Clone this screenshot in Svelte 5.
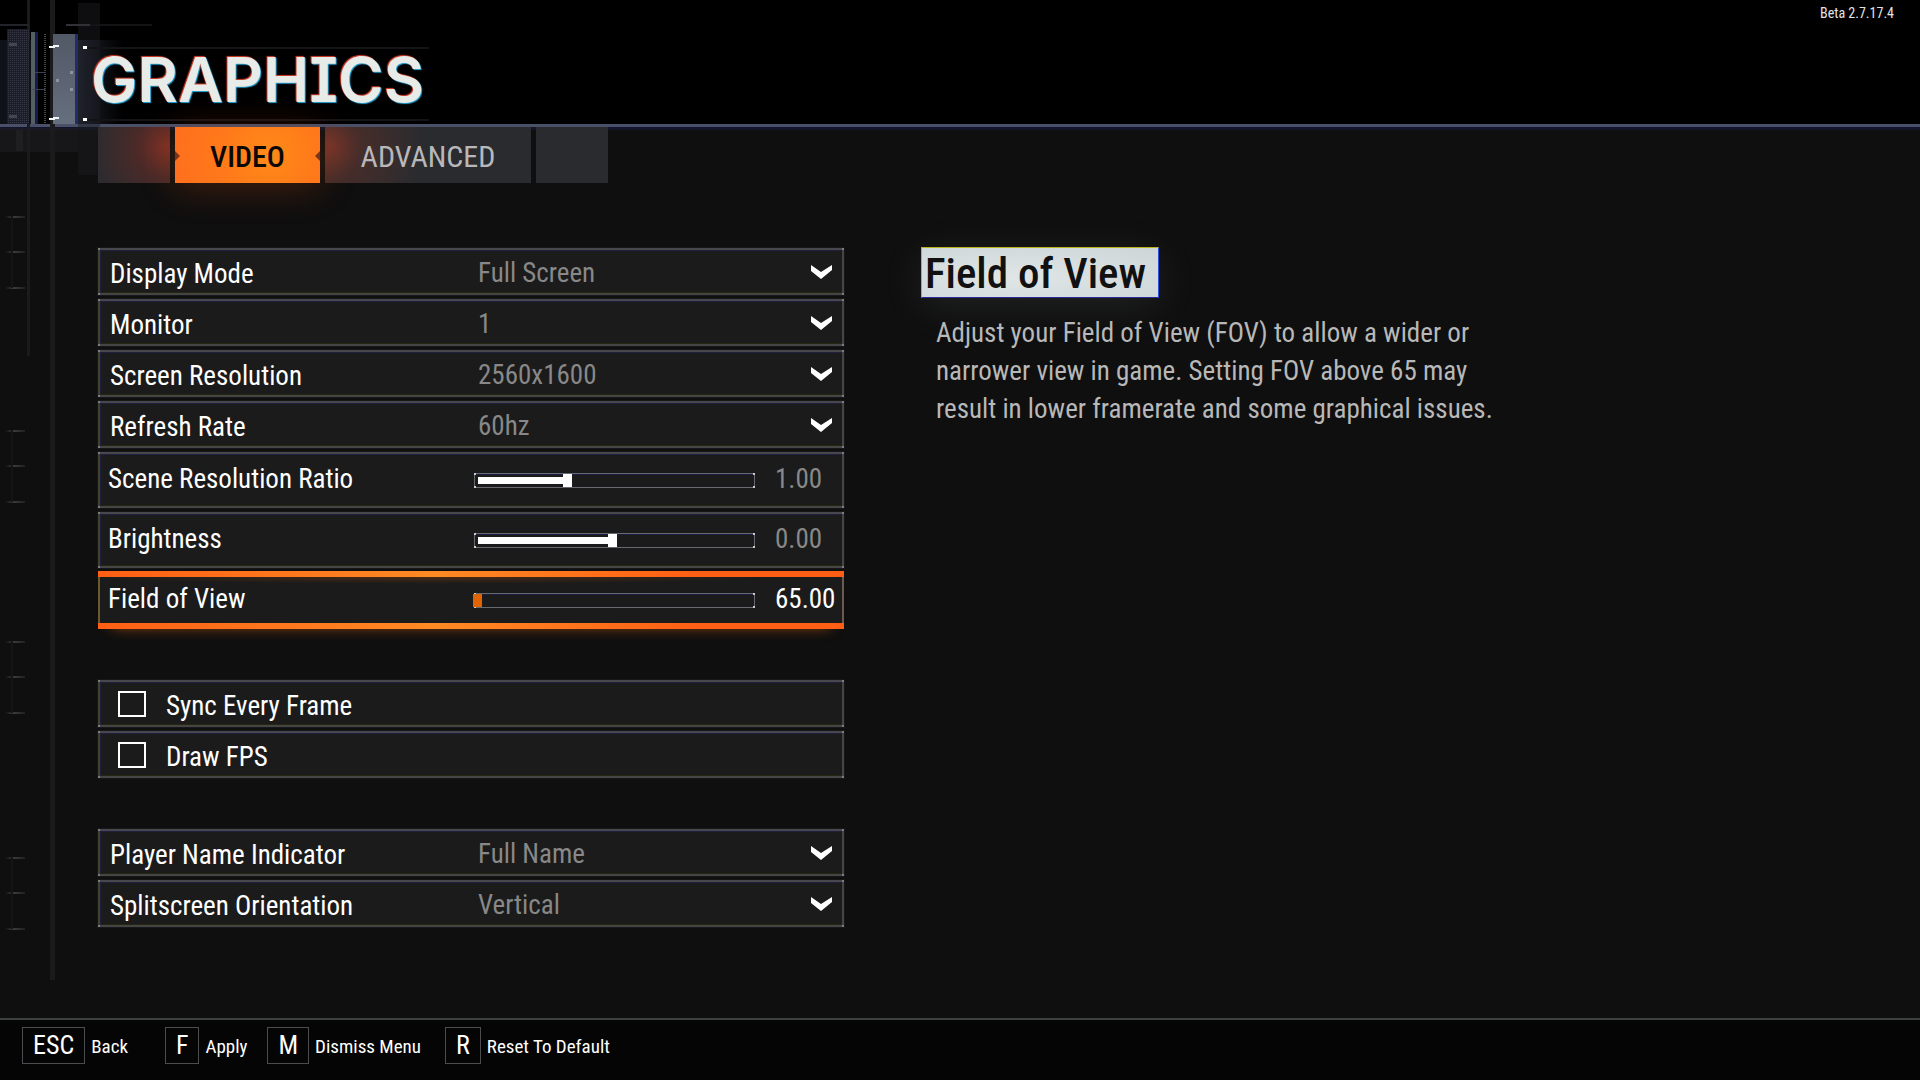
<script>
	const version = 'Beta 2.7.17.4';

	const tabs = [
		{ id: 'video', label: 'VIDEO' },
		{ id: 'advanced', label: 'ADVANCED' }
	];

	const displayOptions = [
		{ id: 'display-mode', label: 'Display Mode', value: 'Full Screen' },
		{ id: 'monitor', label: 'Monitor', value: '1' },
		{ id: 'resolution', label: 'Screen Resolution', value: '2560x1600' },
		{ id: 'refresh', label: 'Refresh Rate', value: '60hz' }
	];

	const playerOptions = [
		{ id: 'player-name', label: 'Player Name Indicator', value: 'Full Name' },
		{ id: 'splitscreen', label: 'Splitscreen Orientation', value: 'Vertical' }
	];

	const keys = [
		{ key: 'ESC', label: 'Back', name: 'back' },
		{ key: 'F', label: 'Apply', name: 'apply' },
		{ key: 'M', label: 'Dismiss Menu', name: 'dismiss' },
		{ key: 'R', label: 'Reset To Default', name: 'reset' }
	];

	let sliders = $state([
		{ id: 'scene-ratio', label: 'Scene Resolution Ratio', min: 0.5, max: 2, value: 1 },
		{ id: 'brightness', label: 'Brightness', min: -1, max: 1, value: 0 },
		{ id: 'fov', label: 'Field of View', min: 65, max: 80, value: 65 }
	]);

	let toggles = $state([
		{ id: 'sync', label: 'Sync Every Frame', checked: false },
		{ id: 'fps', label: 'Draw FPS', checked: false }
	]);

	let activeTab = $state('video');
	let focused = $state('fov');

	function fill(s) {
		return (s.value - s.min) / (s.max - s.min);
	}
</script>

{#snippet dropdown(opt)}
	<div class="row select-row">
		<label for={opt.id}>{opt.label}</label>
		<div class="select">
			<select id={opt.id}>
				<option>{opt.value}</option>
			</select>
			<svg class="chevron" viewBox="0 0 21 14" aria-hidden="true">
				<path d="M0 0 L10 7 L21 0 V5 L10 14 L0 6 Z" fill="#fff" />
			</svg>
		</div>
	</div>
{/snippet}

<div class="screen">
	<svg class="rails" viewBox="0 0 460 1000" aria-hidden="true">
		<defs>
			<pattern id="mesh" width="2" height="2" patternUnits="userSpaceOnUse">
				<rect width="2" height="2" fill="#1c1d26" />
				<rect width="1" height="1" fill="#343746" />
			</pattern>
			<linearGradient id="fadeDown" x1="0" y1="0" x2="0" y2="1">
				<stop offset="0" stop-color="#515866" />
				<stop offset="1" stop-color="#666f7e" />
			</linearGradient>
			<linearGradient id="haze" x1="0" y1="0" x2="1" y2="0">
				<stop offset="0" stop-color="#2c3244" stop-opacity="0.8" />
				<stop offset="1" stop-color="#20222c" stop-opacity="0" />
			</linearGradient>
			<linearGradient id="tick" x1="0" y1="0" x2="1" y2="0">
				<stop offset="0" stop-color="#3c3c3c" stop-opacity="0" />
				<stop offset="0.45" stop-color="#3c3c3c" />
				<stop offset="1" stop-color="#202020" />
			</linearGradient>
		</defs>
		<rect x="27" y="0" width="3" height="356" fill="#1b1b1d" />
		<rect x="50" y="0" width="5" height="980" fill="#1b1b1b" />
		<rect x="0" y="40" width="32" height="84" fill="#10121a" />
		<rect x="7" y="29" width="22" height="95" fill="url(#mesh)" />
		<rect x="31" y="32" width="4" height="92" fill="#555e62" />
		<rect x="35" y="32" width="3" height="92" fill="#161b48" />
		<path d="M45 34V124" stroke="#8c8c86" stroke-dasharray="1 1" />
		<rect x="53" y="34" width="22" height="90" fill="url(#fadeDown)" />
		<rect x="75" y="34" width="3" height="90" fill="#232b68" />
		<rect x="78" y="40" width="45" height="84" fill="url(#haze)" />
		<rect x="78" y="3" width="22" height="172" fill="#1c1c22" opacity="0.5" />
		<rect x="0" y="24" width="29" height="2" fill="#23242a" />
		<rect x="66" y="24" width="24" height="2" fill="#303238" />
		<rect x="90" y="24" width="62" height="2" fill="#131416" />
		<rect x="9" y="43" width="8" height="3" fill="#424650" />
		<rect x="9" y="115" width="8" height="3" fill="#424650" />
		<rect x="35" y="72" width="11" height="1" fill="#394050" />
		<rect x="33" y="89" width="12" height="1" fill="#394050" />
		<path d="M49 47H54V46H59M49 119H54V118H59" stroke="#f0f4f6" stroke-width="2" fill="none" />
		<rect x="70" y="71" width="3" height="3" fill="#8a93a0" />
		<rect x="56" y="79" width="3" height="3" fill="#8a93a0" />
		<rect x="70" y="88" width="3" height="3" fill="#8a93a0" />
		<rect x="83" y="46" width="4" height="3" fill="#fff" />
		<rect x="83" y="118" width="4" height="3" fill="#fff" />
		<rect x="88" y="47" width="341" height="2" fill="#141416" />
		<rect x="88" y="119" width="341" height="2" fill="#141416" />
		<rect x="0" y="128" width="78" height="24" fill="#1d1d1f" opacity="0.6" />
		<rect x="16" y="130" width="7" height="21" fill="#1f1f21" />
		{#each [216, 430, 641, 857] as y}
			<rect x="5" y={y} width="20" height="2" fill="url(#tick)" />
			<rect x="5" y={y + 35} width="20" height="2" fill="url(#tick)" />
			<rect x="5" y={y + 71} width="20" height="2" fill="url(#tick)" />
			<rect x="11" y={y} width="2" height="72" fill="#151515" />
		{/each}
	</svg>

	<header>
		<h1>GRAPHICS</h1>
		<span class="version">{version}</span>
	</header>

	<nav>
		<span class="tab-end"></span>
		{#each tabs as tab}
			<button class="tab {tab.id}" class:active={activeTab === tab.id} onclick={() => (activeTab = tab.id)}>
				{tab.label}
			</button>
		{/each}
		<span class="tab-end"></span>
	</nav>

	<main>
		<div class="settings">
			<section>
				{#each displayOptions as opt}
					{@render dropdown(opt)}
				{/each}
				{#each sliders as s}
					<div class="row slider-row" class:focused={focused === s.id}>
						<label for={s.id}>{s.label}</label>
						<div class="track">
							<input
								id={s.id}
								type="range"
								min={s.min}
								max={s.max}
								step="0.01"
								bind:value={s.value}
								onfocus={() => (focused = s.id)}
								style="--fill: {fill(s)}"
							/>
						</div>
						<output for={s.id}>{s.value.toFixed(2)}</output>
					</div>
				{/each}
			</section>

			<section>
				{#each toggles as t}
					<div class="row toggle-row">
						<input id={t.id} type="checkbox" bind:checked={t.checked} />
						<label for={t.id}>{t.label}</label>
					</div>
				{/each}
			</section>

			<section>
				{#each playerOptions as opt}
					{@render dropdown(opt)}
				{/each}
			</section>
		</div>

		<aside>
			<h2>Field of View</h2>
			<p>
				Adjust your Field of View (FOV) to allow a wider or<br />
				narrower view in game. Setting FOV above 65 may<br />
				result in lower framerate and some graphical issues.
			</p>
		</aside>
	</main>

	<footer>
		{#each keys as k}
			<button class="hint {k.name}">
				<kbd>{k.key}</kbd>
				<span>{k.label}</span>
			</button>
		{/each}
	</footer>
</div>

<style>
	:global(body) {
		background: #0f0f0f;
	}

	.screen {
		position: relative;
		display: flex;
		flex-direction: column;
		min-height: 100vh;
		color: #fff;
		font-family: 'Roboto Condensed', 'Liberation Sans Narrow', Roboto, sans-serif;
		font-size: 27px;
		line-height: 32px;
	}

	button,
	select {
		font: inherit;
		color: inherit;
		background: none;
		border: 0;
		padding: 0;
		cursor: pointer;
	}

	.rails {
		position: absolute;
		z-index: 1;
		top: 0;
		left: 0;
		width: 460px;
		height: 1000px;
		pointer-events: none;
	}

	/* Header */
	header {
		display: flex;
		justify-content: space-between;
		align-items: flex-start;
		box-sizing: border-box;
		height: 127px;
		padding: 0 26px 0 91px;
		background: #000;
		border-bottom: 3px solid #4a5068;
		box-shadow: 0 1px 0 2px #13142b;
	}

	h1 {
		position: relative;
		z-index: 2;
		margin: 40px 0 0;
		font-family: Inter, sans-serif;
		/* serifed capital I */
		font-feature-settings: 'cv08';
		font-size: 62px;
		line-height: 80px;
		font-weight: 600;
		color: #e8ece8;
		text-shadow: -1px -1px 1px #d8402c, 1px 1px 1px #28a8dc;
	}

	.version {
		margin-top: 3px;
		font-size: 14px;
		line-height: 20px;
		color: #e4e4e4;
	}

	/* Tabs */
	nav {
		position: relative;
		z-index: 2;
		display: flex;
		gap: 5px;
		padding-left: 98px;
		height: 56px;
	}

	.tab-end {
		width: 72px;
		background: #2a2b2f;
	}

	.tab-end:first-child {
		background: radial-gradient(circle at 95% 35%, #7a3026 0%, #4a2a28 40%, #2c2b2f 95%);
	}

	.tab {
		padding-top: 4px;
		color: #b8b8ba;
		background: #2a2b2f;
		font-size: 30px;
	}

	.tab.advanced {
		width: 206px;
		background: radial-gradient(circle at 2% 35%, #74342a 0%, #452d2a 16%, #2a2b2f 46%);
	}

	.tab.video {
		width: 145px;
	}

	.tab.active {
		position: relative;
		color: #0c0806;
		font-weight: 500;
		background: radial-gradient(circle at 65% 50%, #ff8a18 0%, #ff7a1a 45%, #ff6f1e 100%);
		box-shadow: 0 4px 36px rgba(200, 70, 10, 0.3);
	}

	.tab.active::before,
	.tab.active::after {
		content: '';
		position: absolute;
		top: 24px;
		border: 5px solid transparent;
	}

	.tab.active::before {
		left: 0;
		border-left-color: #7c3418;
		border-right-width: 0;
	}

	.tab.active::after {
		right: 0;
		border-right-color: #7c3418;
		border-left-width: 0;
	}

	/* Layout */
	main {
		flex: 1;
		display: grid;
		grid-template-columns: minmax(500px, 746px) minmax(0, 1fr);
		column-gap: 77px;
		padding: 65px 98px 40px;
	}

	.settings {
		display: flex;
		flex-direction: column;
		gap: 51px;
	}

	section {
		display: flex;
		flex-direction: column;
		gap: 4px;
	}

	/* Rows */
	.row {
		position: relative;
		display: grid;
		align-items: center;
		box-sizing: border-box;
		height: 47px;
		border: 2px solid #454546;
		border-top-color: #48484c;
		border-left-color: #3f402e;
		background: #1b1b1b;
		box-shadow: 0 0 0 1px #17171a, inset 1px 1px 0 #1f1f40, inset 0 -1px 0 #26260f;
	}

	/* Lit corner points */
	.row::after,
	.track::after {
		--dot: linear-gradient(#7c7c80, #7c7c80);
		content: '';
		position: absolute;
		inset: -2px;
		background:
			var(--dot) top left / 2px 2px no-repeat,
			var(--dot) top right / 2px 2px no-repeat,
			var(--dot) bottom left / 2px 2px no-repeat,
			var(--dot) bottom right / 2px 2px no-repeat;
		pointer-events: none;
	}

	.track::after {
		--dot: linear-gradient(#c8ccce, #c8ccce);
		inset: -1px;
	}

	.select-row {
		grid-template-columns: 367px 1fr;
		padding-left: 10px;
	}

	.select-row label {
		padding-top: 4px;
	}

	.select {
		position: relative;
		display: flex;
	}

	select {
		appearance: none;
		width: 100%;
		height: 40px;
		padding: 2px 0 0 1px;
		color: #888;
		outline: none;
	}

	.chevron {
		position: absolute;
		right: 10px;
		top: 13px;
		width: 21px;
		height: 14px;
		pointer-events: none;
	}

	.slider-row {
		grid-template-columns: 366px 281px 1fr;
		height: 56px;
		padding-left: 8px;
	}

	.slider-row label,
	output {
		padding-bottom: 2px;
	}

	output {
		padding-left: 20px;
		color: #888;
	}

	.track {
		position: relative;
		display: flex;
		box-sizing: border-box;
		height: 15px;
		border: 1px solid #676b70;
		box-shadow: inset 0 1px 0 #1a1c40;
	}

	input[type='range'] {
		appearance: none;
		position: relative;
		z-index: 1;
		width: 279px;
		height: 13px;
		margin: 0 0 0 -2px;
		outline: none;
		background: linear-gradient(#fff, #fff) 5px center / calc((100% - 9px) * var(--fill)) 7px no-repeat;
	}

	input[type='range']::-webkit-slider-thumb {
		appearance: none;
		width: 9px;
		height: 13px;
		border: 0;
		border-radius: 0;
		background: #fff;
	}

	.focused {
		height: 58px;
		margin-top: -1px;
		border: 0;
		padding: 0 2px 0 10px;
		background:
			linear-gradient(90deg, #ff5f14, #ff8a24 45%, #ff5f14 80%) top / 100% 6px no-repeat,
			linear-gradient(90deg, #ff5f14, #ff8a24 45%, #ff5f14 80%) bottom / 100% 6px no-repeat,
			linear-gradient(#6a5a30, #6a5a30) left / 2px 100% no-repeat,
			linear-gradient(#6a5a50, #6a5a50) right / 2px 100% no-repeat,
			radial-gradient(ellipse at 45% 6px, #4a2a14, transparent 60%) top / 100% 14px no-repeat,
			#1b1b1b;
		box-shadow: 0 12px 14px -14px #a04a10;
	}

	.focused::after {
		content: none;
	}

	.focused output {
		color: #fff;
	}

	.focused input[type='range']::-webkit-slider-thumb {
		background: #e06404;
	}

	.toggle-row {
		grid-template-columns: 48px 1fr;
		padding-left: 18px;
	}

	input[type='checkbox'] {
		appearance: none;
		box-sizing: border-box;
		width: 28px;
		height: 26px;
		margin: 0;
		border: 2px solid #fff;
	}

	input[type='checkbox']:checked {
		background: #fff content-box;
		padding: 4px;
	}

	.toggle-row label {
		padding-top: 4px;
	}

	/* Description */
	h2 {
		box-sizing: border-box;
		width: fit-content;
		min-width: 238px;
		margin: -1px 0 0;
		padding: 1px 12px 0 3px;
		border: 1px solid;
		border-color: #b8b420 #2a50e0 #2a2a9a #b8b420;
		background: radial-gradient(ellipse at 40% 60%, #e0e6e6, #cdd5d7);
		color: #111;
		font-size: 43px;
		line-height: 48px;
		font-weight: 500;
		box-shadow: 0 8px 40px rgba(200, 210, 210, 0.1);
	}

	p {
		margin: 16px 0 0 15px;
		color: #b8b8b8;
		line-height: 38px;
	}

	/* Footer */
	footer {
		display: flex;
		align-items: flex-start;
		box-sizing: border-box;
		height: 62px;
		padding: 7px 22px 0;
		border-top: 2px solid #3c403e;
		background: #050505;
	}

	.hint {
		display: flex;
		align-items: center;
		gap: 6px;
	}

	.hint span {
		padding-top: 2px;
		font-size: 19px;
	}

	kbd {
		box-sizing: border-box;
		height: 37px;
		padding: 0 10px;
		border: 1px solid #4a4c50;
		font-family: inherit;
		font-size: 26px;
		line-height: 35px;
	}

	.back {
		margin-right: 37px;
	}

	.apply {
		margin-right: 20px;
	}

	.dismiss {
		margin-right: 24px;
	}
</style>
